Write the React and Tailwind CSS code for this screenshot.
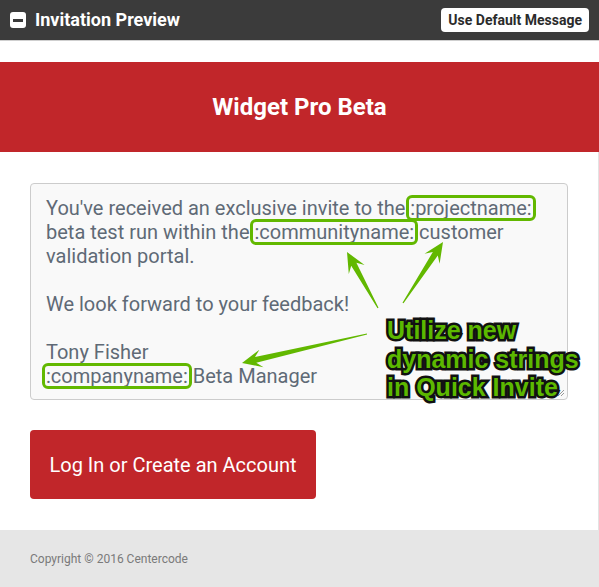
import React from "react";

const GREEN = "#62b800";

// tapered arrow polygon from tail to tip
function arrowPoints(tx, ty, hx, hy) {
  const dx = hx - tx;
  const dy = hy - ty;
  const len = Math.hypot(dx, dy);
  const ux = dx / len;
  const uy = dy / len;
  const nx = -uy;
  const ny = ux;
  const headLen = 20;
  const headW = 9;
  const shaftW = 3;
  const tailW = 0.6;
  const wx = hx - ux * headLen;
  const wy = hy - uy * headLen;
  const jx = hx - ux * (headLen - 6);
  const jy = hy - uy * (headLen - 6);
  const pts = [
    [tx + nx * tailW, ty + ny * tailW],
    [jx + nx * shaftW, jy + ny * shaftW],
    [wx + nx * headW, wy + ny * headW],
    [hx, hy],
    [wx - nx * headW, wy - ny * headW],
    [jx - nx * shaftW, jy - ny * shaftW],
    [tx - nx * tailW, ty - ny * tailW],
  ];
  return pts.map((p) => p.map((v) => v.toFixed(1)).join(",")).join(" ");
}

function Tag({ children }) {
  return (
    <span className="px-[3px] -mx-[3px] rounded-[5px] outline-[3px] outline-solid outline-[#62b800] outline-offset-[-2px]">
      {children}
    </span>
  );
}

export default function App() {
  return (
    <div className="relative w-[599px] h-[587px] overflow-hidden bg-white font-['Roboto',sans-serif]">
      {/* Header */}
      <div className="h-10 bg-[#3b3b3b] border-b border-[#cfcfcf] box-content flex items-center justify-between pl-[10px] pr-[10px]">
        <div className="flex items-center gap-[9px]">
          <div className="w-4 h-4 rounded-[3px] bg-white flex items-center justify-center">
            <div className="w-[10px] h-[3px] bg-[#3b3b3b]" />
          </div>
          <span className="text-white font-bold text-[18px] leading-none">Invitation Preview</span>
        </div>
        <button className="h-6 px-[7px] rounded-[4px] bg-white text-[#2b2b2b] font-bold text-[14px] leading-none">
          Use Default Message
        </button>
      </div>

      <div className="h-[21px]" />

      {/* Banner */}
      <div className="h-[90px] bg-[#c1262a] flex items-center justify-center">
        <h1 className="text-white font-bold text-[24px] leading-none">Widget Pro Beta</h1>
      </div>

      {/* Content */}
      <div className="border-r border-[#e3e3e3] pt-[31px] pb-[31px] px-[30px]">
        <div className="relative w-[538px] h-[217px] rounded-[4px] border border-[#cccccc] bg-[#f9f9f9] pt-[12px] px-[15px] text-[20px] leading-[24px] text-[#5f6a76]">
          <p>
            You've received an exclusive invite to the <Tag>:projectname:</Tag> beta test run within the{" "}
            <Tag>:communityname:</Tag> customer validation portal.
          </p>
          <p className="mt-[24px]">We look forward to your feedback!</p>
          <p className="mt-[24px]">
            Tony Fisher
            <br />
            <Tag>:companyname:</Tag> Beta Manager
          </p>
          <svg className="absolute right-[2px] bottom-[2px]" width="8" height="8" viewBox="0 0 8 8">
            <path d="M1 7 L7 1 M4 7 L7 4" stroke="#999" strokeWidth="1" />
          </svg>
        </div>

        <button className="mt-[30px] w-[286px] h-[69px] rounded-[4px] bg-[#c1262a] text-white text-[20px]">
          Log In or Create an Account
        </button>
      </div>

      {/* Footer */}
      <div className="h-[57px] bg-[#e6e6e6] flex items-center px-[30px]">
        <span className="text-[12px] text-[#7a7a7a]">Copyright © 2016 Centercode</span>
      </div>

      {/* Annotation overlay */}
      <svg className="absolute left-0 top-0 pointer-events-none" width="599" height="587">
        <polygon points={arrowPoints(378, 308, 347, 252)} fill={GREEN} />
        <polygon points={arrowPoints(403, 303, 443, 242)} fill={GREEN} />
        <polygon points={arrowPoints(367, 334, 242, 363)} fill={GREEN} />
      </svg>
      <div className="absolute left-[387px] top-[316px] font-['Liberation_Sans',sans-serif] font-bold text-[25px] leading-[28.5px] text-[#5cb800] [-webkit-text-stroke:5px_#111] [paint-order:stroke_fill]">
        Utilize new
        <br />
        dynamic strings
        <br />
        in Quick Invite
      </div>
    </div>
  );
}
